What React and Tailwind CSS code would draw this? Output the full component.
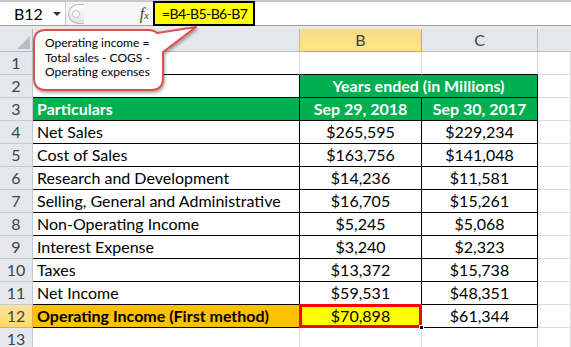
import React from 'react'

const rows = [
  { n: 4, label: 'Net Sales', b: '$265,595', c: '$229,234' },
  { n: 5, label: 'Cost of Sales', b: '$163,756', c: '$141,048' },
  { n: 6, label: 'Research and Development', b: '$14,236', c: '$11,581' },
  { n: 7, label: 'Selling, General and Administrative', b: '$16,705', c: '$15,261' },
  { n: 8, label: 'Non-Operating Income', b: '$5,245', c: '$5,068' },
  { n: 9, label: 'Interest Expense', b: '$3,240', c: '$2,323' },
  { n: 10, label: 'Taxes', b: '$13,372', c: '$15,738' },
  { n: 11, label: 'Net Income', b: '$59,531', c: '$48,351' },
]

const RowHead = ({ children, active }) => (
  <div
    className={
      'h-[23px] flex items-center justify-center border-b border-r text-[16px] text-[#444] ' +
      (active
        ? 'bg-gradient-to-b from-[#fbe3a0] to-[#ffd966] border-[#e2b24a]'
        : 'bg-[#e4e7eb] border-[#c6cad0]')
    }
  >
    {children}
  </div>
)

const Grid = ({ className = '', children }) => (
  <div className={'h-[23px] flex items-center border-b border-r border-[#dadcdd] ' + className}>{children}</div>
)

const Cell = ({ className = '', children }) => (
  <div className={'h-[23px] flex items-center whitespace-nowrap border-b border-r border-black text-[16px] ' + className}>{children}</div>
)

export default function App() {
  return (
    <div className="relative w-[571px] h-[347px] overflow-hidden bg-white font-['Lato','Liberation_Sans',sans-serif] text-black">
      {/* formula bar */}
      <div className="h-[26px] flex border-t-2 border-b border-t-[#c8c8c8] border-b-[#a0a0a0] bg-white">
        <div className="w-[66px] flex items-center justify-between pl-[14px] pr-[4px] border-r border-[#c8c8c8] text-[16px]">
          <span>B12</span>
          <span className="w-0 h-0 border-l-[4px] border-r-[4px] border-t-[4px] border-l-transparent border-r-transparent border-t-[#333]" />
        </div>
        <div className="w-[87px] flex items-center bg-[#f6f6f6]">
          <div className="ml-[2px] w-[16px] h-[20px] rounded-l-full border border-r-0 border-[#b8b8b8] bg-gradient-to-b from-white to-[#e2e2e2] flex items-center pl-[3px]">
            <span className="w-[8px] h-[8px] rounded-full border border-[#c0c0c0] bg-white" />
          </div>
          <span className="ml-auto mr-[4px] font-['Liberation_Serif',serif] italic text-[16px] text-[#444]">
            f<span className="text-[11px]">x</span>
          </span>
        </div>
        <div className="w-[102px] -mt-[1px] h-[25px] bg-[#ffff00] border-2 border-black flex items-center pl-[7px] text-[14px] tracking-[-0.6px] whitespace-nowrap">
          =B4-B5-B6-B7
        </div>
        <div className="flex-1" />
      </div>
      <div className="h-[3px] bg-[#e9eaec]" />

      {/* sheet */}
      <div className="grid grid-cols-[33px_267px_122px_116px_1fr]">
        {/* column headers */}
        <div className="h-[23px] border-b border-r border-[#b7bbc1] bg-[#e4e7eb] flex items-end justify-end pr-[2px] pb-[2px]">
          <span className="w-0 h-0 border-l-[13px] border-t-[13px] border-l-transparent border-t-transparent border-b-0 border-r-0 [border-bottom:13px_solid_#b9bdc3]" />
        </div>
        <div className="h-[23px] border-b border-r border-[#b7bbc1] bg-[#e4e7eb] flex items-center justify-center text-[16px] text-[#444]">A</div>
        <div className="h-[23px] border-b border-r border-[#e2a93c] bg-gradient-to-b from-[#f9d98c] to-[#ffe680] flex items-center justify-center text-[16px] text-[#444]">B</div>
        <div className="h-[23px] border-b border-r border-[#b7bbc1] bg-[#e4e7eb] flex items-center justify-center text-[16px] text-[#444]">C</div>
        <div className="h-[23px] border-b border-[#b7bbc1] bg-[#e4e7eb]" />

        {/* row 1 */}
        <RowHead>1</RowHead>
        <div className="h-[23px] border-b border-r border-b-black border-r-[#dadcdd]" />
        <div className="h-[23px] border-b border-r border-b-black border-r-[#dadcdd]" />
        <div className="h-[23px] border-b border-r border-b-black border-r-[#dadcdd]" />
        <Grid />

        {/* row 2 */}
        <RowHead>2</RowHead>
        <Cell />
        <div className="col-span-2 h-[23px] flex items-center justify-center border-b border-r border-black bg-[#00b050] text-white font-bold text-[16px]">
          Years ended (in Millions)
        </div>
        <Grid />

        {/* row 3 */}
        <RowHead>3</RowHead>
        <Cell className="bg-[#00b050] text-white font-bold pl-[4px]">Particulars</Cell>
        <Cell className="bg-[#00b050] text-white font-bold justify-center">Sep 29, 2018</Cell>
        <Cell className="bg-[#00b050] text-white font-bold justify-center">Sep 30, 2017</Cell>
        <Grid />

        {rows.map((r) => (
          <React.Fragment key={r.n}>
            <RowHead>{r.n}</RowHead>
            <Cell className="pl-[4px]">{r.label}</Cell>
            <Cell className="justify-center">{r.b}</Cell>
            <Cell className="justify-center">{r.c}</Cell>
            <Grid />
          </React.Fragment>
        ))}

        {/* row 12 */}
        <RowHead active>12</RowHead>
        <Cell className="bg-[#ffc000] font-bold pl-[4px]">Operating Income (First method)</Cell>
        <Cell className="relative bg-[#ffff00] justify-center">
          $70,898
          <span className="absolute -left-[1px] -top-[1px] -right-[1px] -bottom-[1px] border-[3px] border-[#ff0000]" />
          <span className="absolute -right-[3px] -bottom-[3px] w-[5px] h-[5px] bg-black border border-white" />
        </Cell>
        <Cell className="justify-center">$61,344</Cell>
        <Grid />

        {/* row 13 */}
        <RowHead>13</RowHead>
        <Grid />
        <Grid />
        <Grid />
        <Grid />
      </div>

      {/* callout */}
      <svg className="absolute left-0 top-0" width="210" height="100" viewBox="0 0 210 100">
        <defs>
          <filter id="sh" x="-10%" y="-10%" width="130%" height="140%">
            <feDropShadow dx="1" dy="2" stdDeviation="1.5" floodColor="#000" floodOpacity="0.35" />
          </filter>
        </defs>
        <path
          d="M46 30 H148 Q154 30 157 33 L196 27 L163 52 V78 Q163 90 151 90 H46 Q34 90 34 78 V42 Q34 30 46 30 Z"
          fill="#fff"
          stroke="#e0504d"
          strokeWidth="2"
          strokeLinejoin="round"
          filter="url(#sh)"
        />
      </svg>
      <div className="absolute left-[45px] top-[36px] text-[12px] leading-[14.5px] text-black">
        Operating income =<br />
        Total sales - COGS -<br />
        Operating expenses
      </div>
    </div>
  )
}
